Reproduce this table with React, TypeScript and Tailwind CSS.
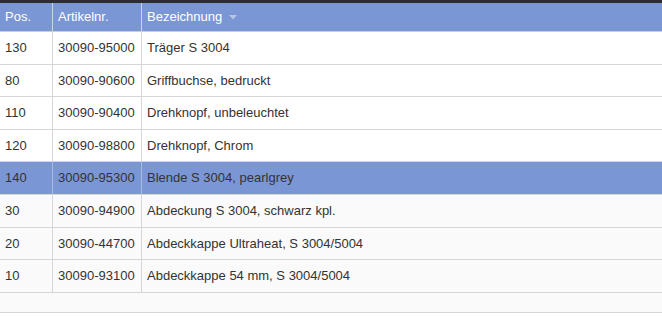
import React from "react";

const rows = [
  ["130", "30090-95000", "Träger S 3004"],
  ["80", "30090-90600", "Griffbuchse, bedruckt"],
  ["110", "30090-90400", "Drehknopf, unbeleuchtet"],
  ["120", "30090-98800", "Drehknopf, Chrom"],
  ["140", "30090-95300", "Blende S 3004, pearlgrey"],
  ["30", "30090-94900", "Abdeckung S 3004, schwarz kpl."],
  ["20", "30090-44700", "Abdeckkappe Ultraheat, S 3004/5004"],
  ["10", "30090-93100", "Abdeckkappe 54 mm, S 3004/5004"],
];

export default function App() {
  return (
    <div
      className="w-[662px] h-[316px] overflow-hidden bg-white text-[13px] text-[#333]"
      style={{ fontFamily: '"Liberation Sans", Arial, sans-serif' }}
    >
      <div className="h-[3px] bg-[#2e2e2e]" />
      <div className="flex h-[29px] bg-[#7b96d4] text-white border-b border-[#c8cfe0]">
        <div className="w-[53px] pl-[5px] flex items-center border-r border-[#c9d3ea]">Pos.</div>
        <div className="w-[89px] pl-[5px] flex items-center border-r border-[#c9d3ea]">Artikelnr.</div>
        <div className="flex-1 pl-[5px] flex items-center gap-[7px]">
          Bezeichnung
          <svg width="8" height="5" viewBox="0 0 8 5" className="mt-[1px]">
            <path d="M0 0 L8 0 L4 4.5 Z" fill="#b7c4e6" />
          </svg>
        </div>
      </div>
      {rows.map((r, i) => {
        const sel = i === 4;
        return (
          <div
            key={i}
            className={`flex h-[32.6px] border-b border-[#d6d6d6] ${sel ? "bg-[#7b96d4]" : i > 4 ? "bg-[#fafafa]" : "bg-white"}`}
          >
            <div className={`w-[53px] pl-[5px] flex items-center border-r ${sel ? "border-[#a9b9e0]" : "border-[#d6d6d6]"}`}>{r[0]}</div>
            <div className={`w-[89px] pl-[5px] flex items-center border-r ${sel ? "border-[#a9b9e0]" : "border-[#d6d6d6]"}`}>{r[1]}</div>
            <div className="flex-1 pl-[5px] flex items-center">{r[2]}</div>
          </div>
        );
      })}
      <div className="h-[20px] bg-[#fafafa] border-b border-[#d6d6d6]" />
    </div>
  );
}
